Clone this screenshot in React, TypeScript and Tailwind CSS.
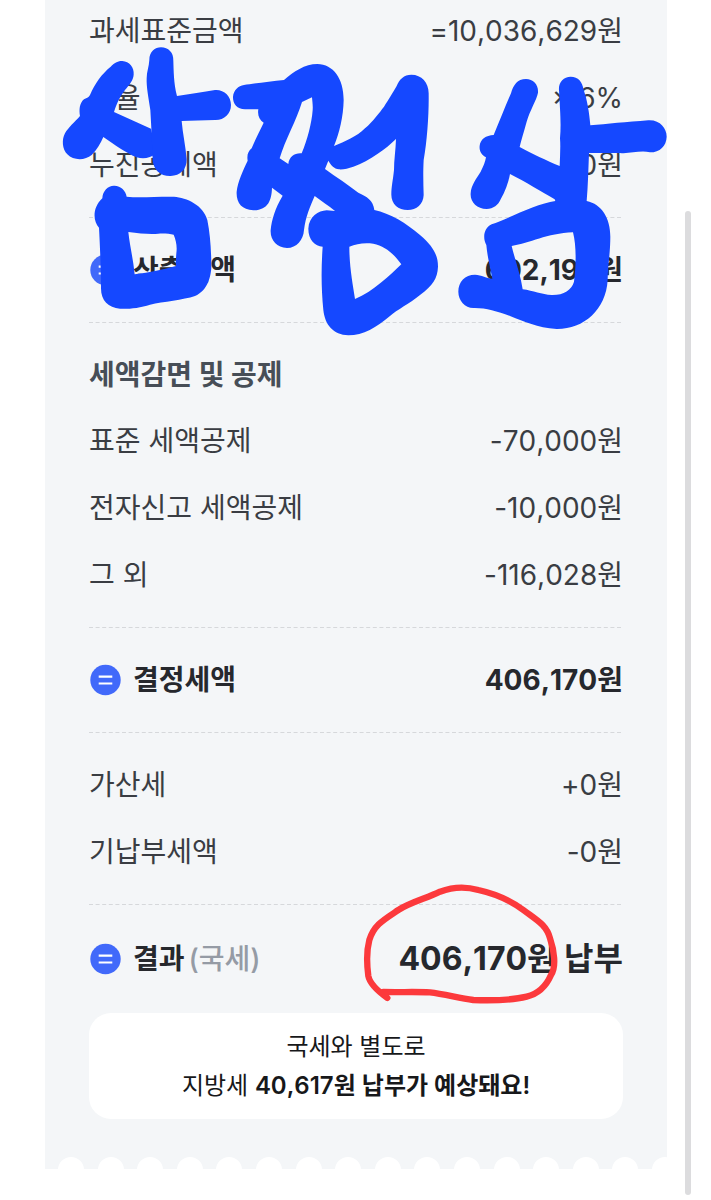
import type { ReactNode } from 'react';

type Line = { label: string; amount: string };

const taxBase: Line[] = [
  { label: '과세표준금액', amount: '=10,036,629원' },
  { label: '세율', amount: '× 6%' },
  { label: '누진공제액', amount: '-0원' },
];

const deductions: Line[] = [
  { label: '표준 세액공제', amount: '-70,000원' },
  { label: '전자신고 세액공제', amount: '-10,000원' },
  { label: '그 외', amount: '-116,028원' },
];

const adjustments: Line[] = [
  { label: '가산세', amount: '+0원' },
  { label: '기납부세액', amount: '-0원' },
];

function EqualsIcon() {
  return (
    <svg viewBox="0 0 32 32" className="size-8 shrink-0" aria-hidden="true">
      <circle cx="16.5" cy="16" r="15.2" fill="#4169fa" />
      <path d="M9.7 12.7h13.6M9.7 19.5h13.6" stroke="#fff" strokeWidth="2.2" />
    </svg>
  );
}

function Lines({ items }: { items: Line[] }) {
  return (
    <dl className="flex flex-col gap-[27px]">
      {items.map((item) => (
        <div key={item.label} className="flex h-10 items-center justify-between">
          <dt>{item.label}</dt>
          <dd>{item.amount}</dd>
        </div>
      ))}
    </dl>
  );
}

function Total({ label, children }: { label: ReactNode; children: ReactNode }) {
  return (
    <div className="flex items-center justify-between font-bold text-[#26282d]">
      <div className="flex items-center gap-3">
        <EqualsIcon />
        <span>{label}</span>
      </div>
      {children}
    </div>
  );
}

function Divider() {
  return (
    <svg className="my-8 block h-px w-full" aria-hidden="true">
      <line x1="0" y1="0.5" x2="100%" y2="0.5" stroke="#d6d8db" strokeDasharray="4 2.6" />
    </svg>
  );
}

function Scallops() {
  return (
    <div className="h-3 overflow-hidden pl-[13px]" aria-hidden="true">
      <div className="-mr-[11px] flex justify-between">
        {Array.from({ length: 16 }, (_, i) => (
          <span key={i} className="size-[26px] shrink-0 rounded-full bg-white" />
        ))}
      </div>
    </div>
  );
}

function Scribbles() {
  return (
    <svg
      viewBox="0 0 711 1200"
      className="pointer-events-none absolute top-0 left-0 w-full"
      aria-hidden="true"
    >
      <g fill="#1548ff" fillRule="evenodd">
        <g transform="translate(40 0) scale(0.33333)">
          <path d="M212 200C225 185 240 182 247 183C268 184 283 202 281 224C280 240 268 255 255 270C242 287 232 305 222 336L333 386L350 460C330 475 310 478 290 472C260 460 225 435 190 411C182 430 170 450 155 465C135 482 100 482 82 463C66 448 65 418 75 400C85 382 105 365 120 348C117 330 118 310 132 298C142 293 146 292 150 285C165 250 185 222 212 200Z" />
          <path d="M328 180C328 155 345 142 363 142C385 142 401 158 400 182C401 210 401 250 411 288C450 283 490 275 525 270C552 268 573 288 573 315C573 342 552 361 525 360C490 362 455 361 425 363C428 400 437 440 440 478C441 508 420 528 392 528C362 529 340 510 338 480C337 440 334 380 331 330C325 290 319 260 320 235C320 215 327 200 328 180Z" />
        </g>
        <g transform="translate(40 180) scale(0.33333)">
          <path d="M187 55C188 32 205 16 223 17C243 18 257 32 260 50C300 55 350 49 402 50C440 53 490 75 502 120C510 160 513 200 514 250C515 285 505 330 465 348C430 360 370 365 330 374C300 384 260 388 240 386C205 384 183 362 183 325C183 270 180 200 177 143C160 125 155 85 187 55ZM265 156C300 160 330 164 355 161C375 160 390 162 401 164C408 180 412 200 409 220C408 235 407 245 408 258C370 268 330 277 284 283C280 240 270 200 265 156Z" />
        </g>
        <g transform="translate(220 40) scale(0.33333)">
          <path d="M72 135C100 131 150 124 192 120C220 95 255 72 292 72C340 73 371 115 371 180C370 230 358 280 342 318C375 305 410 290 435 265C460 243 478 218 492 200C505 180 520 155 530 138C538 118 552 104 574 104C605 104 626 128 626 160C627 220 622 300 611 360C609 400 610 430 611 465C610 492 590 510 563 510C535 510 514 492 514 464C514 440 519 420 522 390C522 360 527 330 528 297C500 325 450 362 400 380C385 385 370 389 357 388C342 386 332 375 325 362L315 387C350 412 385 435 415 458C440 470 460 480 463 510C510 520 560 550 600 585C640 620 654 645 654 680C652 715 640 735 600 765C570 790 530 810 510 828C470 862 430 886 385 886C340 884 315 855 310 810C304 750 303 690 308 620C285 618 265 600 265 566C267 530 295 512 320 511L345 513C325 497 305 483 284 468C270 500 257 530 252 570C250 600 230 624 201 624C170 623 150 600 152 570C155 540 165 505 188 467L156 443C155 480 145 510 100 511C65 510 48 488 50 455C53 425 70 390 83 362C80 345 85 333 95 325C105 300 118 275 131 248C118 240 112 225 115 208L75 208C50 207 38 190 39 170C41 150 55 138 72 135ZM276 172L246 186C230 240 195 300 179 355L205 372C207 350 225 338 245 340C262 300 275 250 278 210C279 195 277 185 276 172ZM388 620C410 612 430 607 460 611C495 618 520 640 544 673C510 705 460 755 405 777C398 730 388 680 388 620Z" />
        </g>
        <g transform="translate(430 60) scale(0.33333)">
          <path d="M288 57C310 57 326 75 324 98C320 120 300 150 290 185C282 215 275 235 269 261C305 280 350 302 389 318C390 290 392 260 390 235C394 190 390 150 387 90C385 68 400 50 422 50C445 50 457 65 461 90C472 120 478 160 481 196C530 192 590 186 655 181C690 179 710 205 710 230C709 258 690 277 660 277C630 270 600 282 570 279L477 279C475 330 474 380 470 423C515 432 541 475 541 530C541 580 533 620 533 660C528 750 460 808 380 807C320 803 285 785 240 768C200 753 165 743 130 744C105 743 85 722 85 695C85 665 105 644 135 644C155 645 170 655 187 656C180 620 172 590 169 555C158 535 160 505 185 493C230 478 320 430 376 423L374 418C335 395 285 365 240 342C235 370 225 395 212 418C205 435 190 447 170 447C140 447 120 425 122 400C123 375 140 355 152 335C160 320 166 305 168 292C155 285 147 273 149 257C151 238 168 226 191 225C210 180 225 140 243 100C250 75 262 57 288 57ZM245 558C300 550 350 520 429 517C440 560 438 620 432 665C425 690 400 706 365 705C335 704 310 692 278 688C272 645 255 600 245 558Z" />
        </g>
      </g>
      <path
        transform="translate(350 870) scale(0.33333)"
        d="M112 384C90 368 60 345 55 318C50 280 50 240 58 210C72 165 100 150 145 120C185 95 230 85 270 65C310 50 350 50 385 60C430 70 480 90 520 120C560 150 590 165 600 205C612 240 620 290 603 315C590 345 570 370 530 380C490 390 430 392 370 390C320 382 280 372 240 367C200 365 150 367 100 366"
        fill="none"
        stroke="#fc393c"
        strokeWidth="19"
        strokeLinecap="round"
        strokeLinejoin="round"
      />
    </svg>
  );
}

export default function App() {
  return (
    <div className="relative min-h-screen bg-white pr-11 pl-[45px] font-['Inter','Noto_Sans_CJK_KR',sans-serif] text-[28px] leading-10 text-[#3a3d43] [font-kerning:none]">
      <main className="bg-[#f4f6f8]">
        <div className="px-11 pt-[11px] pb-[38px]">
          <Lines items={taxBase} />
          <Divider />
          <Total label="산출세액">
            <span>602,198원</span>
          </Total>
          <Divider />
          <h2 className="mb-[26px] font-bold text-[#474e57]">세액감면 및 공제</h2>
          <Lines items={deductions} />
          <Divider />
          <Total label="결정세액">
            <span>406,170원</span>
          </Total>
          <Divider />
          <Lines items={adjustments} />
          <Divider />
          <Total
            label={
              <>
                결과<span className="ml-1 font-medium text-[#959ba5]">(국세)</span>
              </>
            }
          >
            <span className="text-[32px] leading-[44px]">406,170원 납부</span>
          </Total>
          <p className="mt-8 rounded-[22px] bg-white py-[14px] text-center text-2xl leading-[39px] text-[#17181a]">
            국세와 별도로
            <br />
            지방세 <strong className="font-semibold">40,617원 납부가 예상돼요!</strong>
          </p>
        </div>
        <Scallops />
      </main>
      <div className="absolute top-[211px] right-5 bottom-[5px] w-[6px] rounded-full bg-[#dcdcde]" />
      <Scribbles />
    </div>
  );
}
